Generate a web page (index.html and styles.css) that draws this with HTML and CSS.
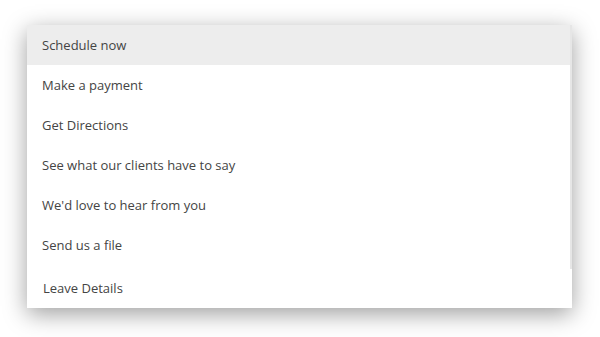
FILE: index.html
```html
<!DOCTYPE html>
<html>
<head>
<meta charset="utf-8">
<link rel="stylesheet" href="styles.css">
</head>
<body>
<div class="menu">
  <ul class="list">
    <li class="item active">Schedule now</li>
    <li class="item">Make a payment</li>
    <li class="item">Get Directions</li>
    <li class="item">See what our clients have to say</li>
    <li class="item">We'd love to hear from you</li>
    <li class="item">Send us a file</li>
    <li class="item last">Leave Details</li>
  </ul>
  <div class="track"></div>
</div>
</body>
</html>
```
FILE: styles.css
```css
html, body {
  margin: 0;
  background: #ffffff;
}
body {
  width: 600px;
  height: 337px;
  padding: 25px 28px 0 27px;
  box-sizing: border-box;
  font-family: "Open Sans", "Liberation Sans", sans-serif;
  overflow: hidden;
}
.menu {
  position: relative;
  width: 545px;
  height: 283px;
  background: #ffffff;
  box-shadow: 0 6px 22px rgba(0, 0, 0, 0.38);
}
.list {
  list-style: none;
  margin: 0;
  padding: 0;
  display: flex;
  flex-direction: column;
}
.item {
  height: 40px;
  display: flex;
  align-items: center;
  padding-left: 15px;
  font-size: 13px;
  color: #444444;
}
.item.active {
  background: #ededed;
}
.item.last {
  margin-top: 3px;
  padding-left: 16px;
}
.track {
  position: absolute;
  top: 0;
  right: 0;
  width: 2px;
  height: 244px;
  background: #e6e6e6;
}
```
